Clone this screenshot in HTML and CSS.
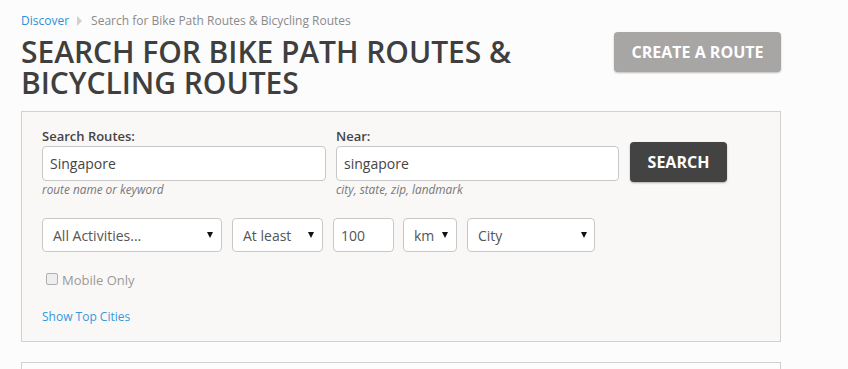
FILE: index.html
```html
<!DOCTYPE html>
<html>
<head>
<meta charset="utf-8">
<link rel="stylesheet" href="styles.css">
</head>
<body>
<div class="page">
  <nav class="crumbs">
    <a class="crumb-link" href="#">Discover</a>
    <span class="crumb-sep"></span>
    <span class="crumb-current">Search for Bike Path Routes &amp; Bicycling Routes</span>
  </nav>
  <header class="head">
    <h1 class="title">SEARCH FOR BIKE PATH ROUTES &amp; BICYCLING ROUTES</h1>
    <a class="btn-create" href="#">CREATE A ROUTE</a>
  </header>
  <section class="panel">
    <div class="row-main">
      <div class="field field-routes">
        <label class="label">Search Routes:</label>
        <div class="input">Singapore</div>
        <div class="hint">route name or keyword</div>
      </div>
      <div class="field field-near">
        <label class="label">Near:</label>
        <div class="input">singapore</div>
        <div class="hint">city, state, zip, landmark</div>
      </div>
      <a class="btn-search" href="#">SEARCH</a>
    </div>
    <div class="row-filters">
      <div class="select sel-activity"><span>All Activities...</span><i class="arrow"></i></div>
      <div class="select sel-atleast"><span>At least</span><i class="arrow"></i></div>
      <div class="num">100</div>
      <div class="select sel-unit"><span>km</span><i class="arrow"></i></div>
      <div class="select sel-city"><span>City</span><i class="arrow"></i></div>
    </div>
    <div class="mobile"><span class="check"></span><span>Mobile Only</span></div>
    <a class="top-cities" href="#">Show Top Cities</a>
  </section>
  <section class="panel panel-next"></section>
</div>
</body>
</html>
```

FILE: styles.css
```css
html, body {
  margin: 0;
  padding: 0;
  background: #fcfcfc;
  font-family: "Open Sans", "Noto Sans", sans-serif;
  color: #444;
}
.page {
  width: 760px;
  margin-left: 21px;
  padding-top: 12px;
}
.crumbs {
  display: flex;
  align-items: center;
  font-size: 12px;
  line-height: 18px;
  height: 18px;
}
.crumb-link {
  color: #2f8fd5;
  text-decoration: none;
}
.crumb-sep {
  width: 0;
  height: 0;
  border-top: 5px solid transparent;
  border-bottom: 5px solid transparent;
  border-left: 5px solid #d0d0d0;
  margin: 0 9px 0 8px;
}
.crumb-current {
  color: #8a8a8a;
}
.head {
  display: flex;
  align-items: flex-start;
  gap: 40px;
  margin-top: 2px;
}
.title {
  flex: 1;
  margin: 4px 0 0;
  font-size: 30px;
  line-height: 31px;
  font-weight: 600;
  color: #3f3f3f;
  letter-spacing: -0.05px;
}
.btn-create {
  flex: none;
  width: 167px;
  height: 40px;
  line-height: 40px;
  text-align: center;
  background: #a8a5a5;
  color: #fff;
  font-weight: 700;
  font-size: 16px;
  text-decoration: none;
  border-radius: 4px;
  box-shadow: 0 1px 2px rgba(0,0,0,0.25);
}
.panel {
  margin-top: 13px;
  border: 1px solid #d3d0d0;
  background: #f9f8f7;
  padding: 15px 20px 0;
  height: 214px;
}
.row-main {
  display: flex;
  align-items: flex-start;
}
.field-routes { width: 284px; }
.field-near { width: 283px; margin-left: 10px; }
.label {
  display: block;
  font-size: 13px;
  line-height: 18px;
  font-weight: 600;
  color: #444;
  margin-bottom: 1px;
}
.input {
  box-sizing: border-box;
  height: 35px;
  border: 1px solid #c8c8c8;
  border-radius: 4px;
  background: #fff;
  font-size: 14px;
  line-height: 33px;
  padding-left: 7px;
  color: #444;
}
.hint {
  font-size: 11.8px;
  line-height: 16px;
  font-style: italic;
  color: #777;
}
.btn-search {
  margin-left: 11px;
  margin-top: 15px;
  width: 97px;
  height: 40px;
  line-height: 40px;
  text-align: center;
  background: #434343;
  color: #fff;
  font-weight: 700;
  font-size: 16px;
  text-decoration: none;
  border-radius: 4px;
  box-shadow: 0 1px 2px rgba(0,0,0,0.3);
}
.row-filters {
  display: flex;
  gap: 10px;
  margin-top: 21px;
}
.select, .num {
  box-sizing: border-box;
  height: 34px;
  border: 1px solid #c8c8c8;
  border-radius: 4px;
  background: #fff;
  font-size: 14px;
  color: #555;
  display: flex;
  align-items: center;
  justify-content: space-between;
  padding: 0 8px 0 10px;
}
.sel-activity { width: 180px; }
.sel-atleast { width: 91px; }
.num { width: 61px; padding-left: 7px; margin-right: -1px; }
.sel-unit { width: 54px; }
.sel-city { width: 128px; padding-right: 7px; }
.arrow {
  width: 0;
  height: 0;
  border-left: 3px solid transparent;
  border-right: 3px solid transparent;
  border-top: 6px solid #111;
}
.mobile {
  display: flex;
  align-items: center;
  margin-top: 19px;
  margin-left: 4px;
  font-size: 13px;
  line-height: 18px;
  color: #9a9a9a;
}
.check {
  box-sizing: border-box;
  width: 12px;
  height: 12px;
  border: 1px solid #b0b0b0;
  border-radius: 2px;
  background: #eee;
  margin-right: 4px;
  margin-top: -2px;
}
.top-cities {
  display: block;
  margin-top: 19px;
  font-size: 12px;
  line-height: 18px;
  color: #3598db;
  text-decoration: none;
}
.panel-next {
  margin-top: 20px;
  height: 40px;
  background: #fcfcfc;
}
```
